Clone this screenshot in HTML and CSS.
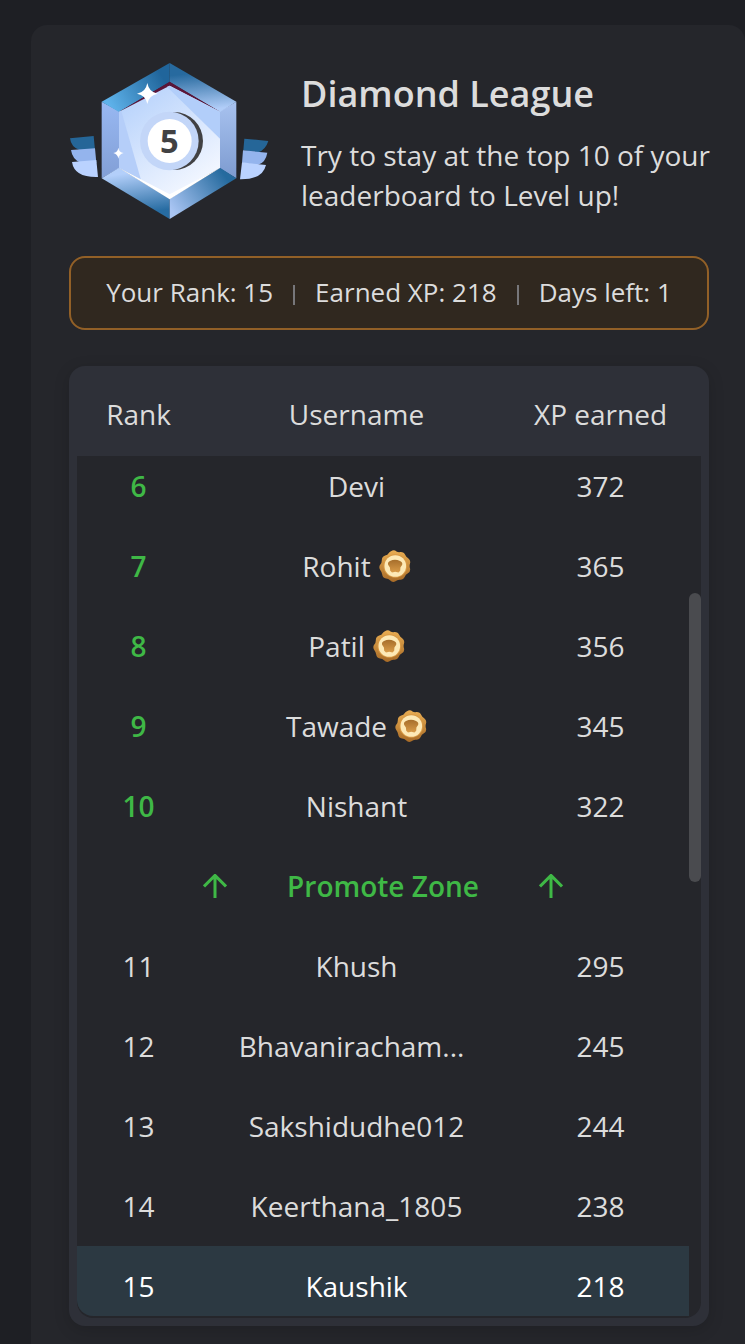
FILE: index.html
```html
<!DOCTYPE html>
<html lang="en">
<head>
<meta charset="utf-8">
<title>Diamond League</title>
<link rel="stylesheet" href="styles.css">
</head>
<body>
<svg class="defs" width="0" height="0" aria-hidden="true">
  <defs>
    <linearGradient id="gold" x1="0" y1="0" x2="0" y2="1"><stop offset="0" stop-color="#e9ad52"/><stop offset="1" stop-color="#a86b27"/></linearGradient>
    <linearGradient id="bronze" x1="0" y1="0" x2="0" y2="1"><stop offset="0" stop-color="#a66e2b"/><stop offset="1" stop-color="#d99b48"/></linearGradient>
    <symbol id="medal" viewBox="0 0 32 32">
      <path fill="url(#gold)" d="M12 1.2Q15-.6 17.5 1.5Q19 2.5 21.5 2.1Q25 2 26.3 5Q27 7 29.2 8.2Q32 10.3 31 13.5Q30.2 16 31 18.3Q31.8 22 28.6 23.6Q26.6 24.6 25.8 26.8Q24.3 30 21 29.8Q18.5 29.5 16.5 31.3Q13.5 33 11 30.3Q9.5 28.7 7 28.5Q3.6 28 3.2 24.5Q3 22.2 1.4 20.2Q-.7 17.3 1.3 14.6Q2.9 12.7 2.8 10.2Q2.8 6.7 6.2 5.6Q8.6 5 9.8 3Q10.5 1.8 12 1.2Z"/>
      <circle cx="16.3" cy="16" r="11.8" fill="#d99a45"/>
      <circle cx="16.3" cy="16" r="10.8" fill="#fde9b6"/>
      <path fill="url(#bronze)" d="M11 11Q16 8.6 21 11Q23.8 12.3 23.2 14.8L21.4 17.5L21.2 20.8L19.5 22.4L16.2 21.8L13 22.4L11.2 20.8L10.9 17.5L9.1 14.8Q8.4 12.3 11 11Z"/>
    </symbol>
    <symbol id="arrow" viewBox="0 0 24 24">
      <path d="M12 24V2M1 12.4L12 1.4L23 12.4" fill="none" stroke="#3fb846" stroke-width="3"/>
    </symbol>
  </defs>
</svg>
<main class="card">
  <header class="league">
    <svg class="badge" viewBox="27 36 600 474" role="img" aria-label="Diamond League badge">
      <defs>
        <linearGradient id="tl" gradientUnits="userSpaceOnUse" x1="155" y1="175" x2="310" y2="85"><stop offset="0" stop-color="#5eb2ea"/><stop offset="1" stop-color="#20659b"/></linearGradient>
        <linearGradient id="tr" gradientUnits="userSpaceOnUse" x1="400" y1="70" x2="412" y2="182"><stop offset="0" stop-color="#276a9f"/><stop offset="1" stop-color="#b1cdf8"/></linearGradient>
        <linearGradient id="bl" gradientUnits="userSpaceOnUse" x1="230" y1="365" x2="250" y2="490"><stop offset="0" stop-color="#b3cffa"/><stop offset="1" stop-color="#276ca2"/></linearGradient>
        <linearGradient id="br" gradientUnits="userSpaceOnUse" x1="335" y1="480" x2="490" y2="370"><stop offset="0" stop-color="#a9c5f3"/><stop offset="1" stop-color="#256a9e"/></linearGradient>
        <linearGradient id="side" x1="0" y1="0" x2="0" y2="1"><stop offset="0" stop-color="#98b8f2"/><stop offset="1" stop-color="#829fd6"/></linearGradient>
        <linearGradient id="sider" x1="0" y1="0" x2="0" y2="1"><stop offset="0" stop-color="#a8c2ef"/><stop offset="1" stop-color="#7d9bd0"/></linearGradient>
        <linearGradient id="face" x1="0" y1="0" x2=".65" y2="1"><stop offset="0" stop-color="#b0cefb"/><stop offset="1" stop-color="#f3f7ff"/></linearGradient>
      </defs>
      <path fill="#256698" d="M30 265L101 258L105 301H60Q33 292 30 265ZM553 266L625 273Q617 299 595 307L550 301Z"/>
      <path fill="#94b4ed" d="M33 300L105 295L109 339H63Q37 329 33 300ZM549 301L622 308Q617 338 593 345L546 338Z"/>
      <path fill="#bad2ff" d="M36 336L109 330L114 381Q43 383 36 336ZM546 337L618 345Q608 389 540 388Z"/>
      <path fill="url(#side)" d="M125 155L177 184V355L125 385Z"/>
      <path fill="url(#sider)" d="M529 155L479 184V355L529 385Z"/>
      <path fill="url(#tl)" d="M125 155L329 39V96L177 186Z"/>
      <path fill="url(#tr)" d="M329 39L529 155L480 186L329 96Z"/>
      <path fill="url(#bl)" d="M125 385L177 353L329 446V507Z"/>
      <path fill="url(#br)" d="M529 385L480 353L329 446V507Z"/>
      <path fill="#5b1539" d="M177 185L329 95L480 185L329 116Z"/>
      <path fill="url(#face)" d="M177 185L329 107L480 185V354L329 438L177 354Z"/>
      <path fill="#b2cefa" d="M321 110L329 107L480 185V266Z"/>
      <path fill="#b5cef9" d="M177 185L184 183L243 390L177 354Z"/>
      <path fill="#fff" d="M177 354L329 433L480 354L329 448Z"/>
      <circle cx="342" cy="273" r="87" fill="#414143"/>
      <circle cx="328" cy="273" r="88" fill="#c3d6f8"/>
      <circle cx="329" cy="273" r="66" fill="#fff"/>
      <text class="level" x="328" y="308" text-anchor="middle">5</text>
      <path fill="#fff" d="M262 99Q267 127 293 131Q267 135 262 162Q257 135 231 131Q257 127 262 99ZM175 293Q177 307 191 309Q177 312 175 326Q173 312 160 309Q173 307 175 293Z"/>
    </svg>
    <div class="intro">
      <h1>Diamond League</h1>
      <p>Try to stay at the top 10 of your leaderboard to Level up!</p>
    </div>
  </header>
  <section class="stats">
    <span>Your Rank: 15</span><i></i><span>Earned XP: 218</span><i></i><span>Days left: 1</span>
  </section>
  <section class="board">
    <div class="row head"><span>Rank</span><span>Username</span><span>XP earned</span></div>
    <div class="viewport">
      <div class="rows">
        <div class="row top first"><b>6</b><span>Devi</span><span>372</span></div>
        <div class="row top"><b>7</b><span class="name">Rohit<svg class="medal"><use href="#medal"/></svg></span><span>365</span></div>
        <div class="row top"><b>8</b><span class="name">Patil<svg class="medal"><use href="#medal"/></svg></span><span>356</span></div>
        <div class="row top"><b>9</b><span class="name">Tawade<svg class="medal"><use href="#medal"/></svg></span><span>345</span></div>
        <div class="row top"><b>10</b><span>Nishant</span><span>322</span></div>
        <div class="zone"><svg class="arrow"><use href="#arrow"/></svg><span>Promote Zone</span><svg class="arrow"><use href="#arrow"/></svg></div>
        <div class="row"><span>11</span><span>Khush</span><span>295</span></div>
        <div class="row"><span>12</span><span class="clipped">Bhavaniracham...</span><span>245</span></div>
        <div class="row"><span>13</span><span>Sakshidudhe012</span><span>244</span></div>
        <div class="row"><span>14</span><span>Keerthana_1805</span><span>238</span></div>
        <div class="row me"><span>15</span><span>Kaushik</span><span>218</span></div>
      </div>
      <div class="track"><div class="thumb"></div></div>
    </div>
  </section>
</main>
</body>
</html>
```
FILE: styles.css
```css
* { box-sizing: border-box; }
body {
  margin: 0;
  height: 1344px;
  overflow: hidden;
  padding: 25px 0 0 31px;
  background: #1e1f24;
  color: #dcdcdc;
  font: 28px/40px "Open Sans", "Noto Sans", sans-serif;
}
.defs { display: block; height: 0; }
.card {
  width: 714px;
  height: 1319px;
  padding: 37px 0 0 38px;
  border-radius: 16px 16px 0 0;
  background: #25262b;
}
.league { display: flex; gap: 32px; height: 158px; }
.badge { flex: none; width: 200px; height: 158px; }
.level { font: 700 98px "Noto Sans", sans-serif; fill: #414143; }
.intro { flex: none; width: 420px; padding-top: 8px; }
h1 { margin: 0; font-size: 36px; line-height: 48px; font-weight: 600; }
p { margin: 17px 0 0; }
.stats {
  display: flex;
  align-items: center;
  justify-content: center;
  height: 74px;
  width: 640px;
  margin-top: 36px;
  padding-bottom: 2px;
  border: 2px solid #926027;
  border-radius: 16px;
  background: #30281f;
  font-size: 26px;
}
.stats i { width: 2px; height: 20px; margin: 5px 20px 0; background: #77777a; }
.board {
  width: 640px;
  height: 960px;
  margin-top: 36px;
  padding: 0 8px 8px;
  border-radius: 16px;
  background: #2e3038;
  box-shadow: 0 4px 16px rgba(0, 0, 0, .15);
}
.row {
  display: grid;
  grid-template-columns: 123px 313px 175px;
  align-items: center;
  width: 612px;
  height: 80px;
  flex: none;
  text-align: center;
}
.head { height: 90px; padding-top: 6px; }
.viewport {
  display: flex;
  height: 862px;
  overflow: hidden;
  border-radius: 0 0 16px 16px;
  background: #25262b;
}
.rows {
  display: flex;
  flex-direction: column;
  width: 612px;
  height: 860px;
  overflow: hidden;
  border-bottom-left-radius: 16px;
}
.first { height: 70px; padding-bottom: 10px; }
.top b { color: #3fb846; font-weight: 600; }
.name { display: flex; align-items: center; justify-content: center; gap: 8px; }
.medal { width: 32px; height: 32px; }
.clipped { padding-right: 10px; }
.zone {
  display: flex;
  flex: none;
  align-items: center;
  justify-content: center;
  gap: 60px;
  height: 80px;
  color: #3fb846;
  font-weight: 600;
}
.arrow { width: 24px; height: 24px; }
.me { height: 70px; padding-top: 10px; background: #2c3942; color: #fff; }
.track { width: 12px; padding-top: 137px; }
.thumb { height: 289px; border-radius: 6px; background: #4a4b4f; }
```
